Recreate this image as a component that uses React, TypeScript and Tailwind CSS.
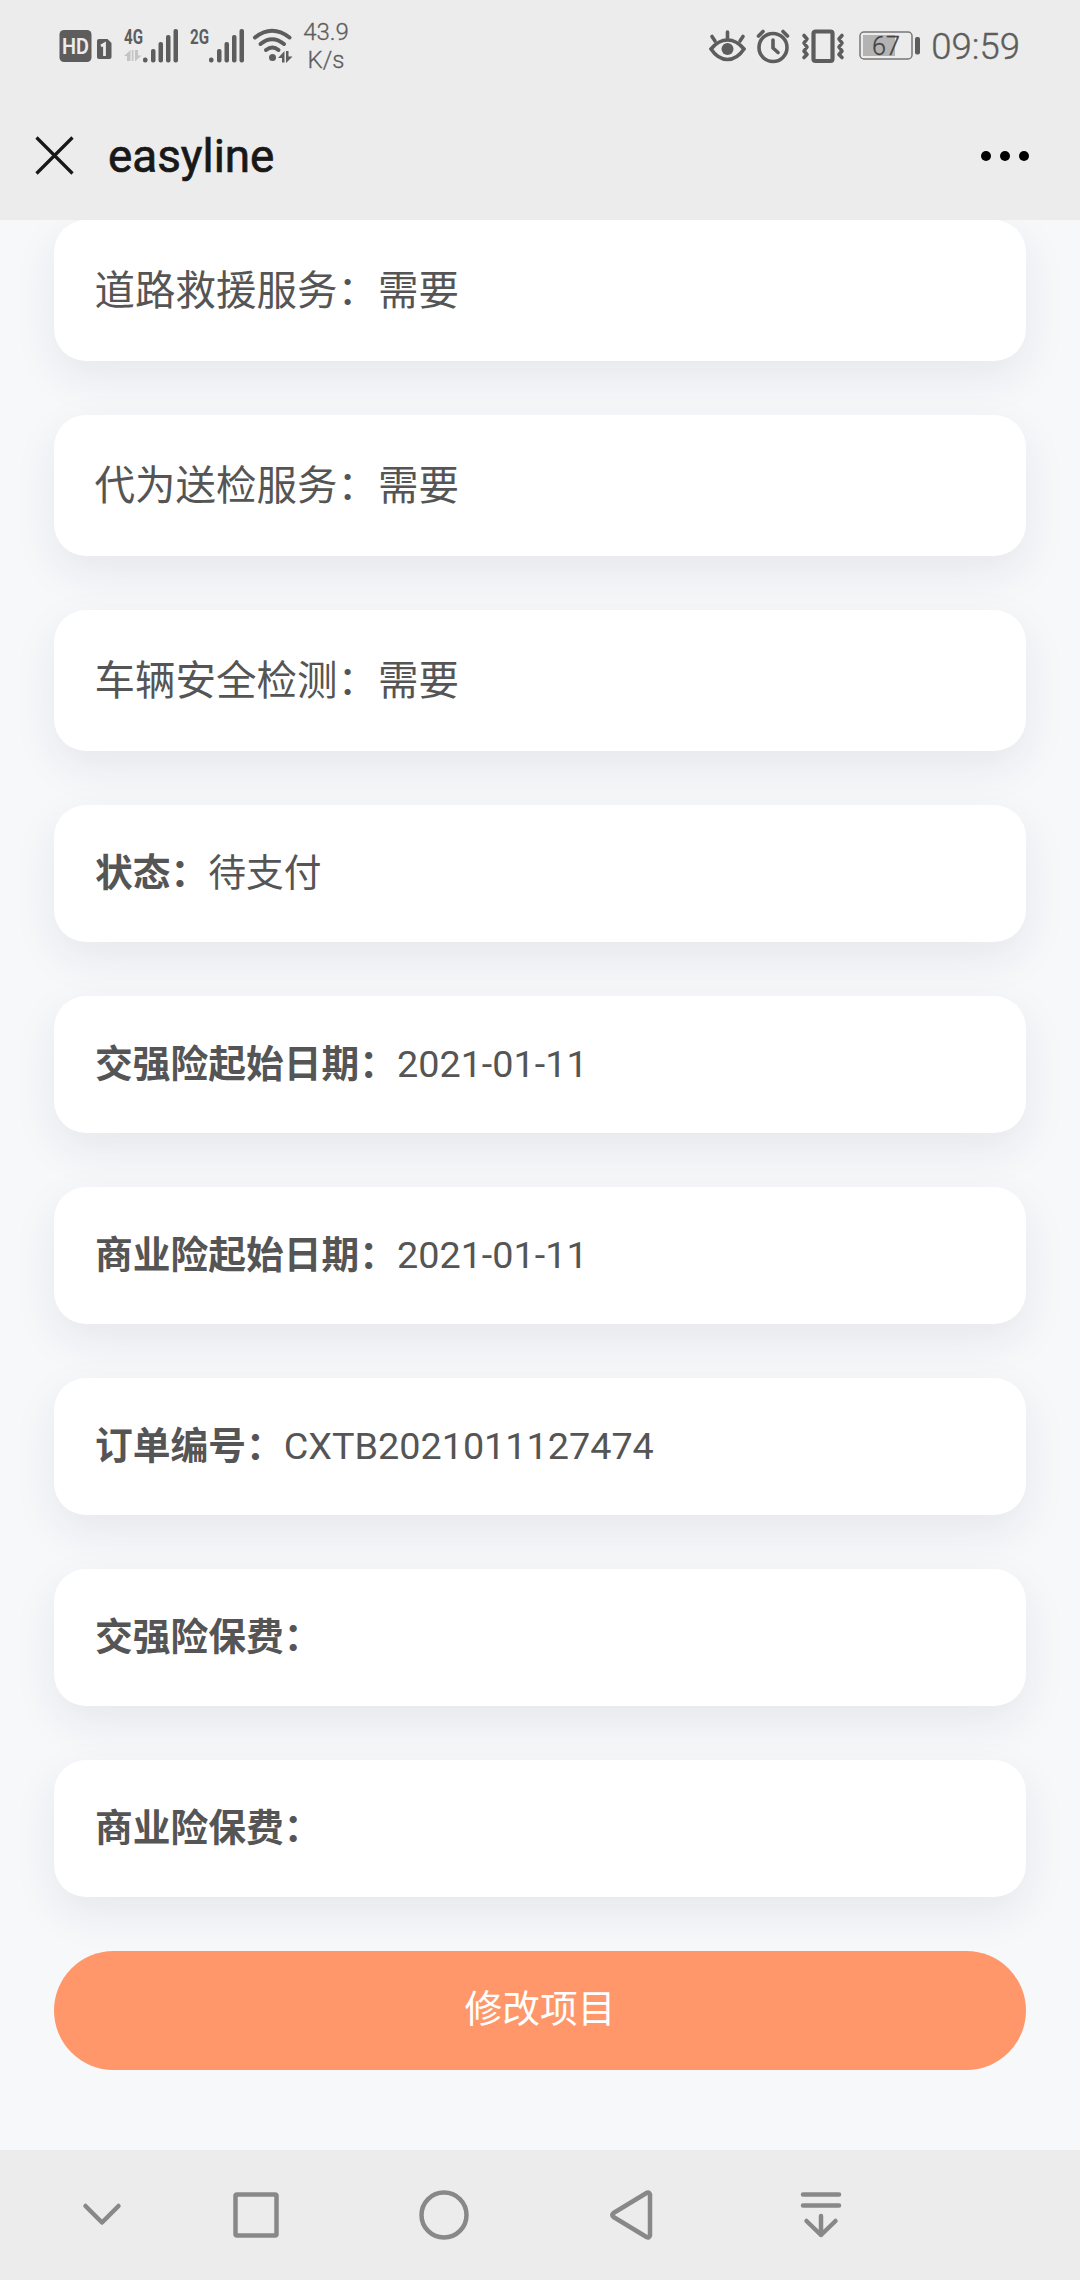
import type { ReactNode } from "react";

type Item = {
  label: string;
  value?: string;
  plain?: boolean;
};

const items: Item[] = [
  { label: "道路救援服务：", value: "需要", plain: true },
  { label: "代为送检服务：", value: "需要", plain: true },
  { label: "车辆安全检测：", value: "需要", plain: true },
  { label: "状态：", value: "待支付" },
  { label: "交强险起始日期：", value: "2021-01-11" },
  { label: "商业险起始日期：", value: "2021-01-11" },
  { label: "订单编号：", value: "CXTB2021011127474" },
  { label: "交强险保费：" },
  { label: "商业险保费：" },
];

function Signal({ label, arrows }: { label: string; arrows?: boolean }) {
  return (
    <svg width="56" height="48" viewBox="0 -6 56 48" fill="#5d5d5d">
      <text x="0" y="16" fontSize="21" fontWeight="700" textLength="19" lengthAdjust="spacingAndGlyphs">
        {label}
      </text>
      {arrows && (
        <path d="M6.500 22v11H3v-5H0zM7.800 22h1.700v11H7.800zM11 22v11.500l6.500-6H14v-5.500z" fill="#c4c4c4" />
      )}
      <rect x="19" y="29.500" width="4.500" height="5" rx="2" />
      <rect x="27" y="21" width="4.500" height="13.500" rx="2" />
      <rect x="34.500" y="14" width="4.500" height="20.500" rx="2" />
      <rect x="42" y="7" width="4.500" height="27.500" rx="2" />
      <rect x="49.500" y="1" width="4.500" height="33.500" rx="2" />
    </svg>
  );
}

function StatusBar() {
  return (
    <div className="flex h-[92px] items-center justify-between pl-[59px] pr-[60px] text-[#5d5d5d]">
      <div className="flex items-center">
        <svg width="54" height="36" viewBox="0 0 54 36">
          <rect x="0.500" y="2" width="32" height="32" rx="4.500" fill="#5d5d5d" />
          <text x="3" y="25.500" fontSize="21.500" fontWeight="600" textLength="27" lengthAdjust="spacingAndGlyphs" fill="#ececec">
            HD
          </text>
          <path d="M40 11h8.500l4 4v14a2 2 0 0 1-2 2H40a2 2 0 0 1-2-2V13a2 2 0 0 1 2-2z" fill="#5d5d5d" />
          <path d="M42 18l3.500-2v12" fill="none" stroke="#ececec" strokeWidth="2.800" />
        </svg>
        <div className="ml-[11px] flex gap-[10px]">
          <Signal label="4G" arrows />
          <Signal label="2G" />
        </div>
        <svg className="ml-[6px]" width="42" height="36" viewBox="0 0 42 36">
          <g fill="none" stroke="#5d5d5d" strokeWidth="4" strokeLinecap="round">
            <path d="M3 9.500Q20 -4 37.500 9.500" />
            <path d="M8.500 16Q20 6.500 32 16" />
            <path d="M14 22Q20.500 17 26.500 22" />
          </g>
          <circle cx="20.500" cy="29.500" r="3.500" fill="#5d5d5d" />
          <path d="M32.500 23v11.500H30V30h-4zM34 23h2.500v5.500h4L34 35z" fill="#5d5d5d" />
        </svg>
        <div className="ml-[8px] w-[48px] text-center text-[24px] font-light leading-7 [-webkit-text-stroke:0.3px]">
          <div>43.9</div>
          <div>K/s</div>
        </div>
      </div>
      <div className="flex items-center">
        <svg width="37" height="36" viewBox="0 0 37 36" fill="none" stroke="#5d5d5d" strokeWidth="3.600" strokeLinecap="round">
          <path d="M2 21Q9.500 12 18.500 12T35 21Q28 31.500 18.500 31.500T2 21z" />
          <path d="M18.500 11V4M6 13L3 8.500M31 13l3-4.500" />
          <circle cx="18.500" cy="21" r="6" fill="#5d5d5d" stroke="none" />
        </svg>
        <svg className="ml-[10px]" width="34" height="36" viewBox="0 0 34 36" fill="none" stroke="#5d5d5d" strokeWidth="3.600" strokeLinecap="round" strokeLinejoin="round">
          <circle cx="17" cy="19.500" r="14" />
          <path d="M17 12v8l5 4.500M2.500 8l4.500-4.500M31.500 8L27 3.500" />
        </svg>
        <svg className="ml-[11px]" width="44" height="36" viewBox="0 0 44 36" fill="none" stroke="#5d5d5d" strokeWidth="3.600" strokeLinecap="round" strokeLinejoin="round">
          <rect x="12.500" y="3.500" width="19" height="29.500" rx="2" strokeWidth="4.200" />
          <path d="M3 7.500l3 3.500-3 4 3 4-3 4 3 3.500-3 3M41 7.500L38 11l3 4-3 4 3 4-3 3.500 3 3" />
        </svg>
        <svg className="ml-[14px]" width="62" height="36" viewBox="0 0 62 36">
          <rect x="1" y="4" width="52" height="27" rx="4" fill="none" stroke="#777" strokeWidth="1.500" />
          <rect x="4" y="7" width="32" height="21" fill="#b3b3b3" />
          <rect x="56" y="9" width="5" height="17.500" rx="2" fill="#5d5d5d" />
          <text x="13" y="27" fontSize="26" fontWeight="300" textLength="28" lengthAdjust="spacingAndGlyphs" fill="#444" stroke="#444" strokeWidth="0.300">
            67
          </text>
        </svg>
        <span className="ml-[10px] pt-px text-[36.500px] font-light leading-9 [-webkit-text-stroke:0.4px]">09:59</span>
      </div>
    </div>
  );
}

function TitleBar() {
  return (
    <div className="flex h-32 items-center justify-between pl-[35px] pr-[51px]">
      <div className="flex items-center">
        <svg width="39" height="39" viewBox="0 0 39 39" stroke="#181818" strokeWidth="3.200">
          <path d="M1.500 1.500l36 36M37.500 1.500l-36 36" />
        </svg>
        <h1 className="ml-[34px] pt-0.5 text-[45.800px] font-normal leading-none text-[#181818] [-webkit-text-stroke:0.7px]">
          easyline
        </h1>
      </div>
      <div className="flex gap-[9px]">
        <span className="size-2.5 rounded-full bg-black" />
        <span className="size-2.5 rounded-full bg-black" />
        <span className="size-2.5 rounded-full bg-black" />
      </div>
    </div>
  );
}

function Card({ item }: { item: Item }) {
  return (
    <div
      className={`flex shrink-0 items-center rounded-[32px] bg-white text-[#555] shadow-[0_16px_44px_rgba(40,40,80,0.08)] ${
        item.plain ? "h-[141px] px-[40.500px] pt-0.5 text-[40.500px]" : "h-[137px] px-[41px] text-[37.750px]"
      }`}
    >
      <span className={item.plain ? "" : "font-bold"}>{item.label}</span>
      <span>{item.value}</span>
    </div>
  );
}

function NavIcon({ children, className }: { children: ReactNode; className?: string }) {
  return (
    <svg
      className={className}
      width="60"
      height="60"
      viewBox="0 0 60 60"
      fill="none"
      stroke="#888"
      strokeWidth="4.500"
      strokeLinecap="round"
      strokeLinejoin="round"
    >
      {children}
    </svg>
  );
}

function NavBar() {
  return (
    <nav className="flex h-[130px] shrink-0 items-center bg-[#ececec] pl-[72px]">
      <NavIcon>
        <path d="M13.500 21L30 37.500 46.500 21" />
      </NavIcon>
      <NavIcon className="ml-[94px]">
        <rect x="9.500" y="9.500" width="41" height="41" rx="1.500" />
      </NavIcon>
      <NavIcon className="ml-[128px]">
        <circle cx="30" cy="30" r="22.500" />
      </NavIcon>
      <NavIcon className="ml-[127px]">
        <path d="M49 9.500v41q-1 3-3.500 1.500L12.500 32q-2.500-2 0-4L45.500 8q2.500-1.500 3.500 1.500z" />
      </NavIcon>
      <NavIcon className="ml-[130px]">
        <path d="M12 9.500h36M12 20.500h36M30 31v19M15.500 36L30 50l14.500-14" />
      </NavIcon>
    </nav>
  );
}

export default function App() {
  return (
    <div className="flex h-[2280px] w-[1080px] flex-col overflow-hidden bg-[#f7f8fa] font-[Roboto,'Noto_Sans_CJK_SC',sans-serif]">
      <header className="shrink-0 bg-[#ececec]">
        <StatusBar />
        <TitleBar />
      </header>
      <main className="flex min-h-0 flex-1 flex-col gap-[54px] overflow-hidden px-[54px]">
        {items.map((item) => (
          <Card key={item.label} item={item} />
        ))}
        <button className="h-[119px] shrink-0 rounded-full bg-[#ff976a] pb-0.5 text-[37.750px] text-white">
          修改项目
        </button>
      </main>
      <NavBar />
    </div>
  );
}
